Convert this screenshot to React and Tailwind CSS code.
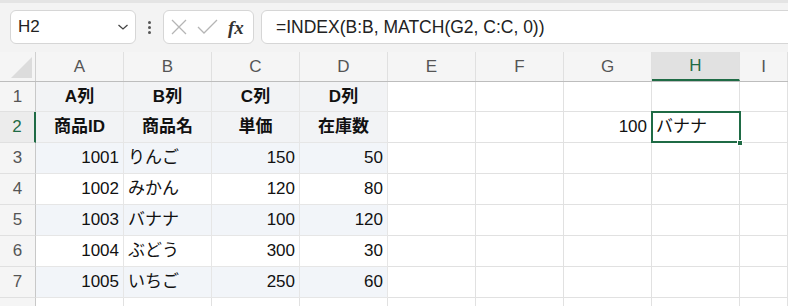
import React from 'react';

const font = { fontFamily: '"Liberation Sans", "Noto Sans CJK JP", sans-serif' };

const cols = ['A', 'B', 'C', 'D', 'E', 'F', 'G', 'H', 'I'];

const data = [
  { h: 'h-[30px]', fill: 'bg-[#f2f3f5]', cells: ['A列', 'B列', 'C列', 'D列'], head: true },
  { h: 'h-[31px]', fill: 'bg-[#f2f3f5]', cells: ['商品ID', '商品名', '単価', '在庫数'], head: true },
  { h: 'h-[31px]', fill: 'bg-[#f2f5f9]', cells: ['1001', 'りんご', '150', '50'] },
  { h: 'h-[31px]', fill: 'bg-white', cells: ['1002', 'みかん', '120', '80'] },
  { h: 'h-[31px]', fill: 'bg-[#f2f5f9]', cells: ['1003', 'バナナ', '100', '120'] },
  { h: 'h-[31px]', fill: 'bg-white', cells: ['1004', 'ぶどう', '300', '30'] },
  { h: 'h-[31px]', fill: 'bg-[#f2f5f9]', cells: ['1005', 'いちご', '250', '60'] },
  { h: 'h-[31px]', fill: 'bg-white', cells: [] },
];

const Toolbar = () => (
  <div className="h-[52px] bg-[#f3f3f3] border-t-[3px] border-[#e4e4e4] flex items-start pl-[10px] pt-[7px] overflow-hidden">
    <div className="shrink-0 w-[126px] h-[34px] bg-white border border-[#d6d6d6] rounded-[6px] flex items-center justify-between pl-[7px] pr-[6px]">
      <span className="text-[17px] text-[#222]">H2</span>
      <svg width="12" height="8" viewBox="0 0 12 8" fill="none" stroke="#444" strokeWidth="1.3">
        <path d="M1.5 2 L6 6 L10.5 2" />
      </svg>
    </div>
    <div className="shrink-0 w-[27px] h-[34px] flex flex-col items-center justify-center gap-[2px]">
      <span className="w-[3px] h-[3px] bg-[#555] rounded-full" />
      <span className="w-[3px] h-[3px] bg-[#555] rounded-full" />
      <span className="w-[3px] h-[3px] bg-[#555] rounded-full" />
    </div>
    <div className="shrink-0 w-[91px] h-[34px] bg-white border border-[#d6d6d6] rounded-[6px] flex items-center pl-[7px] gap-[10px]">
      <svg width="16" height="16" viewBox="0 0 16 16" fill="none" stroke="#b5b5b5" strokeWidth="1.3">
        <path d="M1 1 L15 15 M15 1 L1 15" />
      </svg>
      <svg width="21" height="16" viewBox="0 0 21 16" fill="none" stroke="#b5b5b5" strokeWidth="1.3">
        <path d="M1 8 L7 14 L20 1" />
      </svg>
      <span className="text-[19px] italic font-bold text-[#333] leading-none" style={{ fontFamily: '"Liberation Serif", serif' }}>
        fx
      </span>
    </div>
    <div className="shrink-0 ml-[7px] w-[560px] h-[34px] bg-white border border-[#d6d6d6] rounded-[6px] flex items-center pl-[14px]">
      <span className="text-[17.5px] text-[#222]">=INDEX(B:B, MATCH(G2, C:C, 0))</span>
    </div>
  </div>
);

const ColHeader = () => (
  <div className="flex h-[30px] bg-[#f5f5f5] border-b border-[#bdbdbd]">
    <div className="w-[36px] shrink-0 border-r border-[#d0d0d0] relative">
      <div className="absolute right-[3px] bottom-[3px] w-0 h-0 border-l-[21px] border-l-transparent border-b-[21px] border-b-[#dcdcdc]" />
    </div>
    {cols.map((c) => (
      <div
        key={c}
        className={`${c === 'I' ? 'w-[48px]' : 'w-[88px]'} shrink-0 flex items-center justify-center text-[17px] border-r border-[#e0e0e0] ${
          c === 'H' ? 'bg-[#e1e1e1] text-[#1f6b45] border-b-2 border-b-[#1f6b45]' : 'text-[#555]'
        }`}
      >
        {c}
      </div>
    ))}
  </div>
);

const Row = ({ idx, row }) => {
  const n = idx + 1;
  const selected = n === 2;
  return (
    <div className={`flex ${row.h}`}>
      <div
        className={`w-[36px] shrink-0 flex items-center justify-center text-[17px] border-b border-[#e0e0e0] ${
          selected ? 'text-[#1f6b45] border-r-2 border-r-[#1f6b45] bg-[#ececec]' : 'text-[#555] border-r border-r-[#c8c8c8] bg-[#f5f5f5]'
        }`}
      >
        {n <= 7 ? n : ''}
      </div>
      {cols.map((c, ci) => {
        const inTable = ci < 4 && n <= 7;
        const val = row.cells[ci];
        let align = 'justify-end pr-[4px]';
        if (inTable && row.head) align = 'justify-center font-bold';
        else if (ci === 1) align = 'justify-start pl-[4px]';
        let content = inTable ? val : '';
        if (selected && c === 'G') content = '100';
        if (selected && c === 'H') {
          content = 'バナナ';
          align = 'justify-start pl-[4px]';
        }
        return (
          <div
            key={c}
            className={`${c === 'I' ? 'w-[48px]' : 'w-[88px]'} shrink-0 relative flex items-center text-[17px] text-[#111] border-r border-b ${
              inTable ? `${row.fill} border-[#e6e6e6]` : 'bg-white border-[#e1e1e1]'
            } ${align} ${selected && c === 'H' ? 'z-10' : ''}`}
          >
            {content}
            {selected && c === 'H' && (
              <>
                <div className="absolute -left-px -top-px w-[90px] h-[32px] border-2 border-[#1f6b45]" />
                <div className="absolute -right-[4px] -bottom-[4px] w-[6px] h-[6px] bg-[#1f6b45] border border-white" />
              </>
            )}
          </div>
        );
      })}
    </div>
  );
};

export default function App() {
  return (
    <div className="w-[788px] h-[306px] overflow-hidden bg-white" style={font}>
      <Toolbar />
      <ColHeader />
      {data.map((row, i) => (
        <Row key={i} idx={i} row={row} />
      ))}
    </div>
  );
}
